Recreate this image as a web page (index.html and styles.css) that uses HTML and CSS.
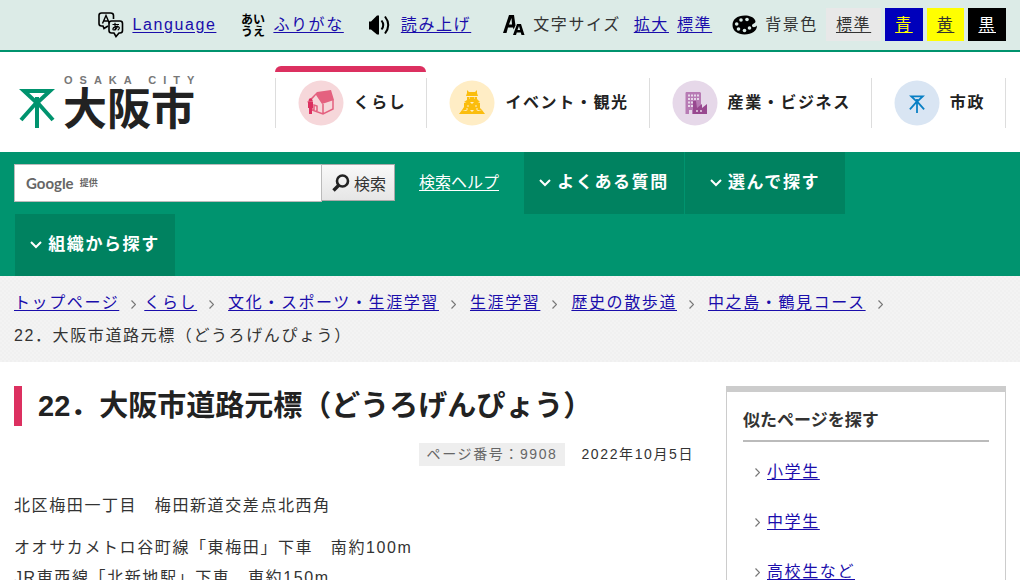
FILE: index.html
```html
<!DOCTYPE html>
<html lang="ja">
<head>
<meta charset="utf-8">
<meta name="viewport" content="width=device-width, initial-scale=1">
<title>大阪市：22．大阪市道路元標（どうろげんぴょう）</title>
<link rel="stylesheet" href="styles.css">
</head>
<body>
<svg class="sprite" aria-hidden="true">
  <symbol id="chevron" viewBox="0 0 5 9"><path d="M.5.5l4 4-4 4" fill="none" stroke="#777" stroke-width="1.2"/></symbol>
  <symbol id="down" viewBox="0 0 12 8"><path d="M1 1l5 5 5-5" fill="none" stroke="#fff" stroke-width="2"/></symbol>
  <symbol id="mark" viewBox="0 0 36 40"><path d="M5 3h26L18 15zM18 14L2 32M18 14l16 18M18 9v31" fill="none" stroke="currentColor" stroke-width="4"/></symbol>
</svg>

<div class="tools">
  <ul class="tools-list">
    <li class="tool">
      <svg width="26" height="26" viewBox="0 0 26 26" aria-hidden="true">
        <path d="M10 14l-4 2.500-1-2.500H3.500Q1 14 1 11.500v-8Q1 1 3.500 1h9Q15.500 1 15.500 3.500V7" fill="none" stroke="#000" stroke-width="1.600"/>
        <path d="M4.500 11.500l3.500-8 3.500 8M5.700 9h4.600" fill="none" stroke="#000" stroke-width="1.400"/>
        <path d="M13.500 9h8.500q2.500 0 2.500 2.500v7q0 2.500-2.500 2.500h-1l-3 3.500-2-3.500h-2.500q-2.500 0-2.500-2.500v-7q0-2.500 2.500-2.500z" fill="none" stroke="#000" stroke-width="1.600"/>
        <path d="M14.500 12.500h6.500M17 10.700q-.3 4 .8 7.500M19.800 13.800q-1.500 4-4 4.200-1.800-.5 0-2.500 2.500-1.600 4.700-.8 2 1.500-.8 3.500" fill="none" stroke="#000" stroke-width="1.200"/>
      </svg>
      <a href="#">Language</a>
    </li>
    <li class="tool">
      <svg class="kana" width="24" height="24" viewBox="0 0 24 24" aria-hidden="true">
        <text x="0" y="11">あい</text>
        <text x="0" y="23">うえ</text>
      </svg>
      <a href="#">ふりがな</a>
    </li>
    <li class="tool tool-voice">
      <svg width="22" height="20" viewBox="0 0 22 20" aria-hidden="true">
        <path d="M0 6.500h2L8 .5h2v19H8l-6-5H0z"/>
        <path d="M12.500 5.500q3.500 4.500 0 9M16 1.500q6.500 8.500 0 17" fill="none" stroke="#000" stroke-width="2"/>
      </svg>
      <a href="#">読み上げ</a>
    </li>
    <li class="tool tool-size">
      <svg width="22" height="22" viewBox="0 0 22 22" aria-hidden="true">
        <path d="M0 19L6 1h5l1.500 10.500-2 4-.5-2H5L3.500 19zM6 10.500h3L8.500 4z" fill-rule="evenodd"/>
        <path d="M10 21l4-11h4l3.500 11h-3l-.7-2.500h-4L13 21zM14.500 16h2.600L16 12z" fill-rule="evenodd"/>
      </svg>
      <span>文字サイズ</span>
      <a href="#">拡大</a>
      <a href="#">標準</a>
    </li>
    <li class="tool tool-color">
      <svg width="25" height="20" viewBox="0 0 25 20" aria-hidden="true">
        <path d="M13 .5C5 .5.500 4.500.500 10c0 6 5.500 9.500 12 9.500C20 19.500 25 16 25 10.500c-2 2.500-5 2-5 0C20 8 25 9 23 5 21.500 2 17.500.5 13 .5z"/>
        <g fill="#dcebe7"><circle cx="9" cy="5" r="1.800"/><circle cx="4.700" cy="9" r="1.800"/><circle cx="6.500" cy="14" r="1.800"/><circle cx="12.500" cy="15.500" r="1.800"/><circle cx="17.500" cy="13" r="1.800"/><circle cx="15" cy="4.500" r="1.800"/></g>
      </svg>
      <span>背景色</span>
      <span class="swatches">
        <a class="swatch swatch-default" href="#">標準</a>
        <a class="swatch swatch-blue" href="#">青</a>
        <a class="swatch swatch-yellow" href="#">黄</a>
        <a class="swatch swatch-black" href="#">黒</a>
      </span>
    </li>
  </ul>
</div>

<header class="header">
  <a class="logo" href="#" aria-label="大阪市">
    <svg width="190" height="72" viewBox="0 0 190 72">
      <use href="#mark" x="0" y="22" width="36" height="40" color="#00936e"/>
      <text class="logo-en" x="45" y="18">OSAKA CITY</text>
      <text class="logo-ja" x="44" y="59">大阪市</text>
    </svg>
  </a>
  <nav>
    <ul class="nav">
      <li class="nav-item nav-current"><a class="nav-link" href="#">
        <svg width="46" height="46" viewBox="0 0 46 46" aria-hidden="true">
          <circle cx="23" cy="23" r="22.500" fill="#f6d7da"/>
          <path d="M19 12l14-2 3 10-12 4-6-9-7 8-2-1z" fill="#e4617f"/>
          <path d="M14 20v10l11 4 10-5V20M25 24v10M16 30v-5l3 1v5" fill="none" stroke="#e4617f" stroke-width="1.500"/>
          <circle cx="12.500" cy="20" r="1.800" fill="#dc3060"/>
          <path d="M10 22h5v6h-1v6h-3v-6h-1z" fill="#dc3060"/>
        </svg>くらし</a></li>
      <li class="nav-item"><a class="nav-link" href="#">
        <svg width="46" height="46" viewBox="0 0 46 46" aria-hidden="true">
          <circle cx="23" cy="23" r="22.500" fill="#ffedc5"/>
          <path d="M18 10l2 2h6l2-2v3l1 3H17l1-3zM18 17h10v2l3 3H15l3-2zM15 23l5-2 3 3 3-3 5 2v2H15zM15 25h16v3l2 2H13l2-3zM13 30l4 1 3-2 3 3 3-3 3 2 4-1 3 4H10z" fill="#fbbd0d"/>
          <path d="M20 18h1M25 18h1M18 26h2M26 26h2M17 29h2M27 29h2" stroke="#ffedc5"/>
        </svg>イベント・観光</a></li>
      <li class="nav-item"><a class="nav-link" href="#">
        <svg width="46" height="46" viewBox="0 0 46 46" aria-hidden="true">
          <circle cx="23" cy="23" r="22.500" fill="#e6d8e9"/>
          <path d="M14 12h14l1 1v21h-9v-4h-3v4h-3.500V13z" fill="#b77bb4"/>
          <path d="M16 15.500h11M16 19h11M16 22.500h6M16 26h5" stroke="#e6d8e9" stroke-width="1.800" stroke-dasharray="2 1"/>
          <path d="M21 34V21h3l1 7 5-4v4l5-4v10z" fill="#98488f"/>
          <path d="M24 31h2m2 0h2" stroke="#e6d8e9" stroke-width="1.500"/>
        </svg>産業・ビジネス</a></li>
      <li class="nav-item"><a class="nav-link" href="#">
        <svg width="46" height="46" viewBox="0 0 46 46" aria-hidden="true">
          <circle cx="23" cy="23" r="22.500" fill="#d9e5f3"/>
          <use href="#mark" x="15" y="15" width="16" height="18" color="#087fc4"/>
        </svg>市政</a></li>
    </ul>
  </nav>
</header>

<div class="band">
  <form class="search" role="search">
    <input class="search-box" type="text" aria-label="サイト内検索">
    <span class="search-brand" aria-hidden="true"><span class="google">Google</span><span class="by">提供</span></span>
    <button class="search-button" type="button">
      <svg width="18" height="18" viewBox="0 0 18 18" aria-hidden="true"><circle cx="10.500" cy="7" r="5.500" fill="none" stroke="#222" stroke-width="2.600"/><path d="M7 11l-5.500 5.500" stroke="#222" stroke-width="3.400"/></svg>検索</button>
  </form>
  <a class="help" href="#">検索ヘルプ</a>
  <ul class="tabs">
    <li class="tab-item"><a class="tab" href="#"><svg width="12" height="8" aria-hidden="true"><use href="#down"/></svg>よくある質問</a></li>
    <li class="tab-item"><a class="tab" href="#"><svg width="12" height="8" aria-hidden="true"><use href="#down"/></svg>選んで探す</a></li>
    <li class="tab-item"><a class="tab" href="#"><svg width="12" height="8" aria-hidden="true"><use href="#down"/></svg>組織から探す</a></li>
  </ul>
</div>

<nav aria-label="パンくず">
  <ol class="crumbs">
    <li class="crumb crumb-top"><a href="#">トップページ</a><svg width="5" height="9"><use href="#chevron"/></svg></li>
    <li class="crumb"><a href="#">くらし</a><svg width="5" height="9"><use href="#chevron"/></svg></li>
    <li class="crumb"><a href="#">文化・スポーツ・生涯学習</a><svg width="5" height="9"><use href="#chevron"/></svg></li>
    <li class="crumb"><a href="#">生涯学習</a><svg width="5" height="9"><use href="#chevron"/></svg></li>
    <li class="crumb"><a href="#">歴史の散歩道</a><svg width="5" height="9"><use href="#chevron"/></svg></li>
    <li class="crumb"><a href="#">中之島・鶴見コース</a><svg width="5" height="9"><use href="#chevron"/></svg></li>
    <li class="crumb">22．大阪市道路元標（どうろげんぴょう）</li>
  </ol>
</nav>

<div class="page">
  <main>
    <h1 class="title">22．大阪市道路元標（どうろげんぴょう）</h1>
    <div class="info"><span class="number">ページ番号：9908</span><span>2022年10月5日</span></div>
    <p class="text">北区梅田一丁目　梅田新道交差点北西角</p>
    <p class="text">オオサカメトロ谷町線「東梅田」下車　南約100m<br>JR東西線「北新地駅」下車　東約150m</p>
  </main>
  <aside class="side">
    <h2 class="side-title">似たページを探す</h2>
    <ul class="side-list">
      <li class="side-item"><svg width="5" height="9"><use href="#chevron"/></svg><a href="#">小学生</a></li>
      <li class="side-item"><svg width="5" height="9"><use href="#chevron"/></svg><a href="#">中学生</a></li>
      <li class="side-item"><svg width="5" height="9"><use href="#chevron"/></svg><a href="#">高校生など</a></li>
    </ul>
  </aside>
</div>
</body>
</html>
```

FILE: styles.css
```css
* { box-sizing: border-box; }

body {
  margin: 0;
  background: #fff;
  color: #333;
  font-family: "Liberation Sans", "Noto Sans CJK JP", sans-serif;
  font-size: 16px;
  line-height: 30px;
  letter-spacing: 0.1em;
}

ul, ol { margin: 0; padding: 0; list-style: none; }
a { color: #1a0dab; text-underline-offset: 2px; }
svg { flex: none; }
.sprite { position: absolute; width: 0; height: 0; }

/* Accessibility tools */
.tools {
  padding: 8px 14px 9px;
  background: #dcebe7;
  border-bottom: 2px solid #00936e;
}
.tools-list { display: flex; justify-content: flex-end; gap: 25px; }
.tool { display: flex; align-items: center; gap: 8px; white-space: nowrap; }
.tool-voice { gap: 10px; }
.tool-size { margin-left: 7px; }
.tool-size span { margin-right: 5px; }
.tool-color { margin-left: -5px; }
.kana { font-size: 12px; font-weight: bold; letter-spacing: 0; }
.swatches { display: flex; gap: 4px; }
.swatch { padding: 0 10px; line-height: 33px; }
.swatch-default { background: #e8e8e8; color: #333; }
.swatch-blue { background: #00b; color: #ff0; }
.swatch-yellow { background: #ff0; color: #333; }
.swatch-black { background: #000; color: #fff; }

/* Site header */
.header {
  display: flex;
  justify-content: space-between;
  padding: 14px 14px 14px 19px;
}
.logo { display: flex; }
.logo-en { font-size: 11px; font-weight: bold; letter-spacing: 7px; fill: #777; }
.logo-ja { font-size: 44px; font-weight: bold; letter-spacing: 0; fill: #222; }
.nav { display: flex; }
.nav-item { border-top: 6px solid transparent; padding-top: 6px; }
.nav-current {
  border-top: 0;
  padding-top: 0;
}
.nav-current::before {
  content: "";
  display: block;
  height: 6px;
  margin-bottom: 6px;
  border-radius: 6px 6px 0 0;
  background: #dc3060;
}
.nav-link {
  display: flex;
  align-items: center;
  gap: 10px;
  height: 50px;
  padding: 0 20px 0 22px;
  border-left: 1px solid #ddd;
  color: #222;
  font-weight: bold;
  text-decoration: none;
  white-space: nowrap;
}
.nav-item:last-child .nav-link { border-right: 1px solid #ddd; }

/* Search band */
.band {
  display: flex;
  flex-wrap: wrap;
  padding: 0 15px 0 14px;
  background: #00946f;
}
.search { position: relative; display: flex; width: 381px; height: 38px; margin-top: 12px; }
.search-box { flex: 1; min-width: 0; border: 1px solid #bbb; background: #fff; padding: 0 12px; font-size: 16px; }
.search-brand {
  position: absolute;
  left: 12px;
  top: 0;
  display: flex;
  align-items: center;
  gap: 6px;
  height: 38px;
  color: #666;
  letter-spacing: 0;
  pointer-events: none;
}
.google { font-family: Lato, sans-serif; font-size: 15px; font-weight: bold; }
.by { font-size: 9px; font-weight: bold; }
.search-button {
  display: flex;
  align-items: center;
  gap: 4px;
  height: 37px;
  padding: 0 8px 0 10px;
  border: 1px solid #aaa;
  border-left: 0;
  background: linear-gradient(#f8f8f8, #e6e6e6);
  color: #333;
  font-family: inherit;
  font-size: 16px;
  letter-spacing: 0;
}
.help { margin: 16px 24px 0; color: #fff; letter-spacing: 0; }
.tabs { display: contents; }
.tab-item { margin-left: 1px; }
.tab {
  display: flex;
  align-items: center;
  justify-content: center;
  gap: 6px;
  width: 160px;
  height: 62px;
  background: #008260;
  color: #fff;
  font-size: 17px;
  font-weight: bold;
  text-decoration: none;
}

/* Breadcrumbs */
.crumbs {
  display: flex;
  flex-wrap: wrap;
  padding: 10px 14px;
  background: #f3f3f3 repeating-conic-gradient(#f0f0f0 0 25%, #f3f3f3 0 50%) 0 0 / 4px 4px;
  line-height: 33px;
}
.crumb { display: flex; align-items: center; }
.crumb svg { margin: 4px 14px 0 12px; }
.crumb-top svg { margin-right: 8px; }

/* Content */
.page {
  display: grid;
  grid-template-columns: minmax(0, 1fr) 280px;
  gap: 32px;
  padding: 24px 14px;
}
.title {
  margin: 0;
  padding-left: 16px;
  border-left: 8px solid #dc3060;
  color: #222;
  font-size: 29px;
  line-height: 40px;
  letter-spacing: 0;
}
.info {
  display: flex;
  justify-content: flex-end;
  gap: 16px;
  margin: 17px 0 25px;
  font-size: 14px;
  line-height: 23px;
}
.number { padding: 0 8px; background: #eee; color: #666; }
.text { margin: 0 0 12px; }
.side { border: 1px solid #ccc; border-top-width: 6px; padding: 15px 16px; }
.side-title {
  margin: 0 0 15px;
  padding-bottom: 5px;
  border-bottom: 2px solid #bbb;
  font-size: 17px;
  line-height: 28px;
  letter-spacing: 0;
}
.side-list { display: grid; gap: 20px; padding-left: 12px; }
.side-item { display: flex; align-items: center; gap: 7px; }
```
